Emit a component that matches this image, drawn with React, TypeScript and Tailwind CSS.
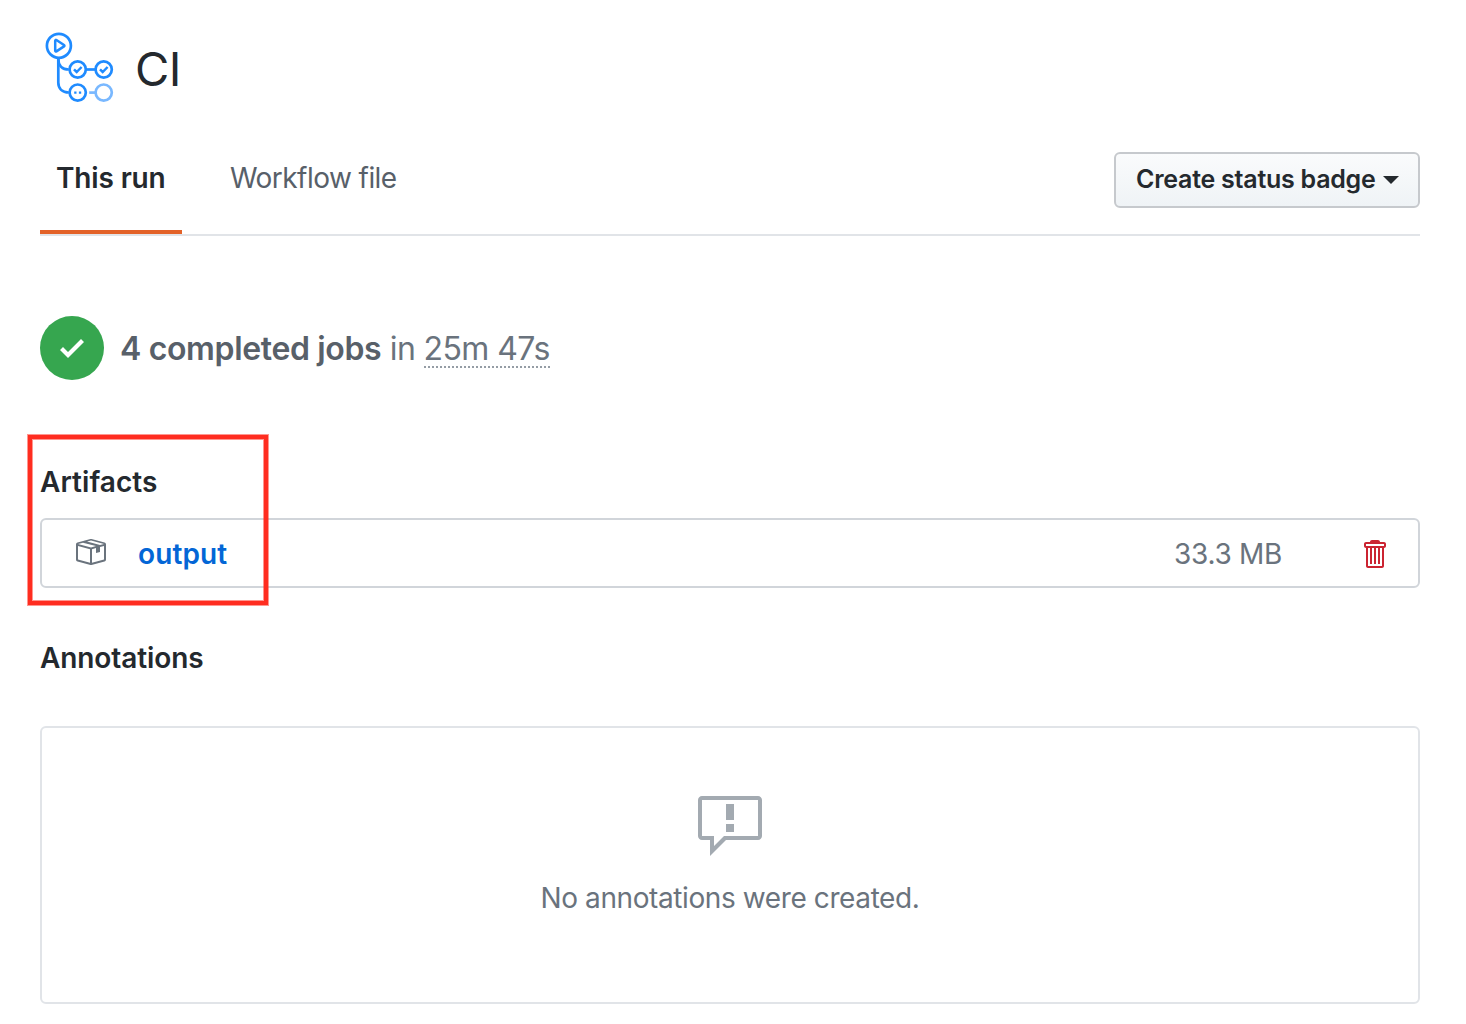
import React from "react";

function ActionsLogo() {
  return (
    <svg width="80" height="80" viewBox="0 0 80 80" fill="none" stroke="#1f8bff" strokeWidth="2.7" className="shrink-0">
      <circle cx="18.900" cy="17.800" r="12" />
      <path d="M15.200 12.700c0-.7.6-1 1.200-.7l7.600 5c.6.4.6 1 0 1.400l-7.600 5c-.6.3-1.200 0-1.200-.7z" strokeWidth="2.500" strokeLinejoin="round" />
      <path d="M18.300 30v24.500c0 6 4 10 10.500 10" />
      <path d="M18.300 31c0 6.500 4 10.500 10.500 10.500" />
      <circle cx="37.700" cy="41.500" r="8.100" />
      <circle cx="63.700" cy="41.500" r="8.100" />
      <path d="M46 41.500h9.500" />
      <path d="M34 41.300l2.700 2.700 4.900-5M60 41.300l2.700 2.700 4.900-5" strokeWidth="2.500" />
      <circle cx="37.700" cy="64.600" r="8.100" />
      <path d="M34.200 64.600h2.300M38.900 64.600h2.300" strokeWidth="2.300" />
      <g stroke="#79b8ff">
        <circle cx="63.700" cy="64.600" r="8.100" />
        <path d="M49.200 64.600h6.500" />
      </g>
    </svg>
  );
}

function CheckIcon() {
  return (
    <svg width="24" height="32" viewBox="0 0 12 16" fill="currentColor">
      <path fillRule="evenodd" d="M12 5l-8 8-4-4 1.500-1.500L4 10l6.500-6.500L12 5z" />
    </svg>
  );
}

function PackageIcon() {
  return (
    <svg width="32" height="32" viewBox="0 0 16 16" fill="currentColor">
      <path
        fillRule="evenodd"
        d="M1 4.270v7.470c0 .45.3.84.75.97l6.500 1.730c.16.05.34.05.5 0l6.500-1.730c.45-.13.75-.52.75-.97V4.270c0-.45-.3-.84-.75-.97l-6.500-1.740a1.400 1.400 0 0 0-.5 0L1.750 3.300c-.45.13-.75.52-.75.97zm7 9.090l-6-1.590V5l6 1.610v6.750zM2 4l2.500-.67L11 5.060l-2.500.67L2 4zm13 7.770l-6 1.590V6.610l2-.55V8.500l2-.53V5.530L15 5v6.770zm-2-7.240L6.500 2.800l2-.53L15 4l-2 .53z"
      />
    </svg>
  );
}

function TrashIcon() {
  return (
    <svg width="24" height="32" viewBox="0 0 12 16" fill="currentColor">
      <path
        fillRule="evenodd"
        d="M11 2H9c0-.55-.45-1-1-1H5c-.55 0-1 .45-1 1H2c-.55 0-1 .45-1 1v1c0 .55.45 1 1 1v9c0 .55.45 1 1 1h7c.55 0 1-.45 1-1V5c.55 0 1-.45 1-1V3c0-.55-.45-1-1-1zm-1 12H3V5h1v8h1V5h1v8h1V5h1v8h1V5h1v9zm1-10H2V3h9v1z"
      />
    </svg>
  );
}

function ReportIcon() {
  return (
    <svg width="64" height="64" viewBox="0 0 16 16" fill="currentColor">
      <path
        fillRule="evenodd"
        d="M0 2c0-.55.45-1 1-1h14c.55 0 1 .45 1 1v9c0 .55-.45 1-1 1H7l-4 4v-4H1c-.55 0-1-.45-1-1V2zm1 0v9h3v2.500L6.500 11H15V2H1zm6 1h2v4H7V3zm0 5h2v2H7V8z"
      />
    </svg>
  );
}

export default function App() {
  return (
    <main className="h-[1024px] w-[1466px] overflow-hidden bg-white pl-10 pr-[46px] pt-7 font-['Inter',sans-serif] text-[28px] leading-[42px] text-[#24292e]">
      <header className="flex h-20 items-center gap-[15px]">
        <ActionsLogo />
        <h1 className="pt-0.5 text-[47px] leading-[60px] tracking-[-0.5px]">CI</h1>
      </header>

      <nav className="mt-10 flex h-[88px] justify-between border-b-2 border-[#e1e4e8]">
        <div className="flex">
          <a className="h-[86px] w-[142px] whitespace-nowrap border-b-4 border-[#e36228] pl-4 pt-[9px] font-semibold tracking-[-0.15px]">
            This run
          </a>
          <a className="ml-8 whitespace-nowrap px-4 pt-[9px] tracking-[-0.55px] text-[#586069]">Workflow file</a>
        </div>
        <button className="mt-1 flex h-14 w-[306px] items-center whitespace-nowrap rounded-md border-2 border-[#c6c9cd] bg-linear-to-b from-[#fafbfc] to-[#eff3f6] pb-0.5 pl-5 text-[25px] font-semibold tracking-[-0.25px]">
          Create status badge
          <span className="ml-[7px] mt-0.5 border-x-8 border-t-8 border-x-transparent border-t-[#24292e]" />
        </button>
      </nav>

      <section className="mt-20 flex items-center gap-4">
        <span className="flex size-16 items-center justify-center rounded-full bg-[#36a64f] text-white">
          <CheckIcon />
        </span>
        <p className="whitespace-nowrap pt-0.5 text-[32px] leading-[38px] tracking-[-0.6px] text-[#6a737d]">
          <strong className="font-semibold tracking-[-0.35px] text-[#586069]">4 completed jobs</strong> in{" "}
          <span className="inline-block h-[38px] border-b-2 border-dotted border-[#959da5]">25m 47s</span>
        </p>
      </section>

      <section className="relative mt-[81px]">
        <h2 className="font-semibold tracking-[0.05px]">Artifacts</h2>
        <div className="mt-[15px] flex h-[70px] items-center rounded-md border-2 border-[#d1d5da] pl-8 pr-8">
          <span className="pb-0.5 text-[#6a737d]">
            <PackageIcon />
          </span>
          <a className="ml-8 pt-0.5 font-semibold tracking-[0.1px] text-[#0366d6]">output</a>
          <span className="ml-auto pt-0.5 tracking-[-0.3px] text-[#6a737d]">33.3 MB</span>
          <span className="ml-20 pt-0.5 text-[#cb2431]">
            <TrashIcon />
          </span>
        </div>
        <div className="absolute -left-3 -top-[26px] h-[170px] w-60 border-4 border-[#ff2d20] shadow-[0_0_0_1px_#ff2d2080,inset_0_0_0_1px_#ff2d2080]" />
      </section>

      <section className="mt-[49px]">
        <h2 className="font-semibold tracking-[-0.1px]">Annotations</h2>
        <div className="mt-[47px] flex h-[278px] flex-col items-center rounded-md border-2 border-[#e1e4e8] pt-16 text-[#a3aab1]">
          <ReportIcon />
          <p className="mt-[21px] tracking-[-0.4px] text-[#6a737d]">No annotations were created.</p>
        </div>
      </section>
    </main>
  );
}
